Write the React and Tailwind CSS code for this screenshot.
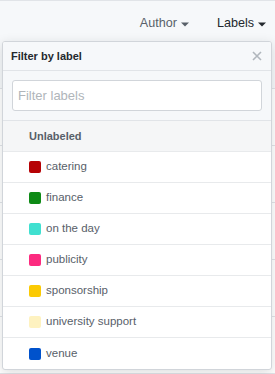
import React from "react";

const labels = [
  { name: "catering", color: "#b60205" },
  { name: "finance", color: "#0e8a16" },
  { name: "on the day", color: "#40e0d0" },
  { name: "publicity", color: "#fc2a7f" },
  { name: "sponsorship", color: "#fbca04" },
  { name: "university support", color: "#fef2c0" },
  { name: "venue", color: "#0052cc" },
];

function Caret({ color }) {
  return (
    <svg width="8" height="5" viewBox="0 0 8 5" className="ml-[4px] mt-[2px]">
      <path d="M0 0.5 L8 0.5 L4 4.5 Z" fill={color} />
    </svg>
  );
}

export default function App() {
  return (
    <div
      className="relative w-[275px] h-[374px] overflow-hidden bg-white"
      style={{ fontFamily: '"Liberation Sans", Arial, sans-serif' }}
    >
      {/* background page */}
      <div className="h-[89px] bg-[#f6f8fa] border-t border-b border-[#e1e4e8] flex justify-end items-start pt-[14px] pr-[9px] gap-[28px]">
        <div className="flex items-center text-[12.6px] text-[#586069] leading-[16px]">
          Author
          <Caret color="#586069" />
        </div>
        <div className="flex items-center text-[12.6px] text-[#24292e] leading-[16px]">
          Labels
          <Caret color="#24292e" />
        </div>
      </div>
      <div className="flex flex-col">
        {[0, 1, 2, 3, 4].map((i) => (
          <div key={i} className="h-[57px] border-b border-[#e1e4e8]" />
        ))}
      </div>

      {/* dropdown menu */}
      <div className="absolute left-[2px] top-[41px] w-[270px] bg-white border border-[#d1d5da] rounded-[3px] shadow-[0_3px_12px_rgba(27,31,35,0.15)] overflow-hidden">
        <div className="h-[29px] bg-[#f6f8fa] border-b border-[#e1e4e8] flex items-center justify-between pl-[8px] pr-[9px]">
          <span className="text-[11px] font-bold text-[#24292e]">Filter by label</span>
          <svg width="10" height="10" viewBox="0 0 10 10">
            <path d="M1 1 L9 9 M9 1 L1 9" stroke="#b1b7bd" strokeWidth="1.6" />
          </svg>
        </div>
        <div className="h-[50px] bg-[#f6f8fa] border-b border-[#e1e4e8] px-[9px] flex items-center">
          <input
            placeholder="Filter labels"
            className="w-full h-[31px] bg-white border border-[#d1d5da] rounded-[3px] px-[5px] text-[13px] text-[#24292e] placeholder:text-[#b0b5ba] outline-none"
            style={{ fontFamily: '"Liberation Sans", Arial, sans-serif' }}
          />
        </div>
        <div className="h-[31px] bg-[#f5f6f7] border-b border-[#e8eaec] flex items-center pl-[26px]">
          <span className="text-[11px] font-bold text-[#586069]">Unlabeled</span>
        </div>
        {labels.map((l, i) => (
          <div
            key={l.name}
            className={
              "h-[31px] flex items-center pl-[26px] " +
              (i < labels.length - 1 ? "border-b border-[#e8eaec]" : "")
            }
          >
            <span
              className="w-[12px] h-[12px] rounded-[2px] mr-[5px]"
              style={{ backgroundColor: l.color }}
            />
            <span className="text-[11.5px] text-[#586069]">{l.name}</span>
          </div>
        ))}
      </div>
    </div>
  );
}
